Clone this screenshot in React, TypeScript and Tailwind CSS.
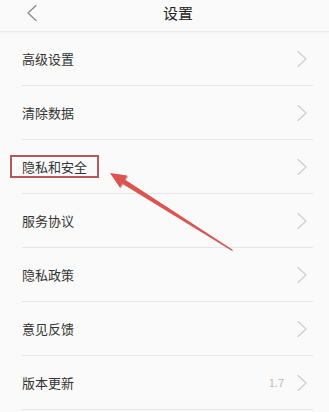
const items = ["高级设置", "清除数据", "隐私和安全", "服务协议", "隐私政策", "意见反馈", "版本更新"]

function Chevron({ left, className }: { left?: boolean; className?: string }) {
  return (
    <svg width="10" height="16" viewBox="0 0 10 16" className={className} fill="none">
      <polyline
        points={left ? "9,0.5 1,8 9,15.5" : "1,0.5 9,8 1,15.5"}
        stroke="currentColor"
        strokeWidth="1.3"
        strokeLinecap="round"
        strokeLinejoin="round"
      />
    </svg>
  )
}

export default function App() {
  return (
    <div
      className="relative w-[329px] h-[412px] overflow-hidden bg-[#fafafa] text-[#333]"
      style={{ fontFamily: '"Noto Sans CJK SC", "Noto Sans", sans-serif' }}
    >
      <header className="h-[32px] border-b border-[#ececec] shadow-[0_1px_2px_rgba(0,0,0,0.04)] relative">
        <div className="h-[26px] flex items-center">
          <Chevron left className="ml-[27px] text-[#8a8a8a]" />
          <span className="absolute left-[163px] top-[3px] text-[15px] leading-[20px] text-[#222]">设置</span>
        </div>
      </header>

      <ul className="pl-[22px] pr-[16px]">
        {items.map((label) => (
          <li key={label} className="h-[54px] flex items-center border-b border-[#e6e6e6]">
            {label === "隐私和安全" ? (
              <span className="ml-[-12px] px-[10px] h-[23px] flex items-center border-2 border-[#b7575a] text-[13px] leading-none">
                {label}
              </span>
            ) : (
              <span className="text-[13px] leading-none">{label}</span>
            )}
            <div className="ml-auto flex items-center gap-[13px] mr-[6px]">
              {label === "版本更新" && <span className="text-[11px] text-[#bdbdbd]">1.7</span>}
              <Chevron className="text-[#cfcfcf]" />
            </div>
          </li>
        ))}
      </ul>

      <svg className="absolute left-0 top-0 pointer-events-none" width="329" height="412">
        <polygon
          points="111,174 128.2,176.6 125.8,180.4 233.3,250.6 232.7,251.4 123.2,184.6 120.8,188.4"
          fill="#555"
          opacity="0.45"
        />
        <polygon
          points="110,173 127.2,175.6 124.8,179.4 232.3,249.6 231.7,250.4 122.2,183.6 119.8,187.4"
          fill="#e0524d"
        />
      </svg>
    </div>
  )
}
